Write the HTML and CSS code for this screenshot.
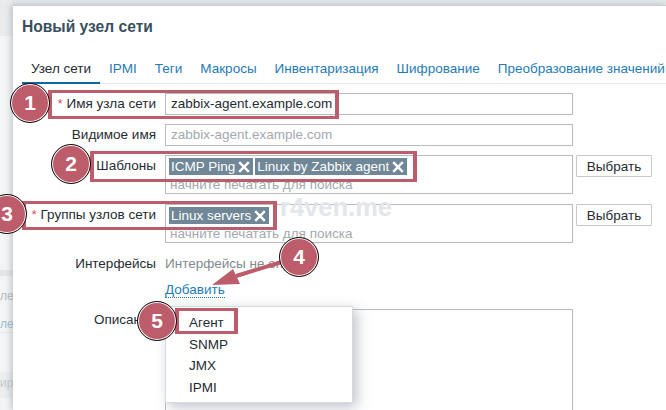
FILE: index.html
```html
<!DOCTYPE html>
<html lang="ru">
<head>
<meta charset="utf-8">
<title>Новый узел сети</title>
<link rel="stylesheet" href="styles.css">
</head>
<body>
<aside class="behind">
  <div class="behind-head"></div>
  <div class="behind-row band"></div>
  <div class="behind-row text">ле</div>
  <div class="behind-row text link">ле</div>
  <div class="behind-row blank"></div>
  <div class="behind-row text muted">ир</div>
</aside>
<div class="stage">
  <div class="topband"></div>
  <main class="dialog">
    <h1 class="title">Новый узел сети</h1>
    <nav class="tabs">
      <a class="tab active">Узел сети</a>
      <a class="tab">IPMI</a>
      <a class="tab">Теги</a>
      <a class="tab">Макросы</a>
      <a class="tab">Инвентаризация</a>
      <a class="tab">Шифрование</a>
      <a class="tab">Преобразование значений</a>
    </nav>
    <form class="form">
      <div class="row">
        <label class="label"><span class="req">*</span> Имя узла сети</label>
        <div class="input value">zabbix-agent.example.com</div>
      </div>
      <div class="row">
        <label class="label">Видимое имя</label>
        <div class="input placeholder">zabbix-agent.example.com</div>
      </div>
      <div class="row multi-row">
        <label class="label">Шаблоны</label>
        <div class="multi">
          <div class="chips">
            <span class="chip">ICMP Ping<svg class="x" viewBox="0 0 10 10"><path d="M1 1 9 9M9 1 1 9"/></svg></span>
            <span class="chip">Linux by Zabbix agent<svg class="x" viewBox="0 0 10 10"><path d="M1 1 9 9M9 1 1 9"/></svg></span>
          </div>
          <div class="hint">начните печатать для поиска</div>
        </div>
        <button type="button" class="btn">Выбрать</button>
      </div>
      <div class="row multi-row">
        <label class="label"><span class="req">*</span> Группы узлов сети</label>
        <div class="multi">
          <div class="chips">
            <span class="chip">Linux servers<svg class="x" viewBox="0 0 10 10"><path d="M1 1 9 9M9 1 1 9"/></svg></span>
          </div>
          <div class="hint">начните печатать для поиска</div>
        </div>
        <button type="button" class="btn">Выбрать</button>
      </div>
      <div class="row iface">
        <label class="label">Интерфейсы</label>
        <div class="iface-col">
          <div class="iface-none">Интерфейсы не определены</div>
          <a class="add">Добавить</a>
        </div>
      </div>
      <div class="row desc">
        <label class="label">Описание</label>
        <div class="textarea"></div>
      </div>
    </form>
  </main>
</div>

<div class="watermark">r4ven.me</div>

<ul class="menu">
  <li>Агент</li>
  <li>SNMP</li>
  <li>JMX</li>
  <li>IPMI</li>
</ul>

<div class="box b1"></div>
<div class="box b2"></div>
<div class="box b3"></div>
<div class="box b5"></div>

<svg class="arrow" viewBox="0 0 666 410"><path class="arrow-line" d="M285 261 236 276"/><path class="arrow-head" d="M212 285 233 269 240 284Z"/></svg>

<div class="badge n1">1</div>
<div class="badge n2">2</div>
<div class="badge n3">3</div>
<div class="badge n4">4</div>
<div class="badge n5">5</div>
</body>
</html>
```
FILE: styles.css
```css
* { box-sizing: border-box; }
html, body { margin: 0; }
html { overflow: hidden; }
body {
  display: flex;
  width: 666px;
  height: 410px;
  overflow: hidden;
  position: relative;
  background: #f3f4f5;
  font-family: Arial, "Liberation Sans", sans-serif;
  font-size: 13.5px;
  color: #1f2c33;
}
.behind { flex: none; width: 13px; height: 410px; display: flex; flex-direction: column; overflow: hidden; font-size: 12px; line-height: 16px; }
.behind-head { height: 36px; margin-bottom: 234px; background: #e9ebed; }
.behind-row { width: 13px; overflow: hidden; color: #b4bcc2; white-space: nowrap; }
.band { height: 6px; margin-bottom: 12px; background: #e3e6e8; }
.text { height: 16px; margin-bottom: 12px; border-bottom: 0; }
.link { color: #9dbdd2; margin-bottom: 0; }
.blank { height: 40px; border-top: 1px solid #e6e8ea; }
.muted { height: 26px; padding-top: 3px; background: #ebedee; color: #c6cbcf; }
.stage { flex: 1; min-width: 0; display: flex; flex-direction: column; }
.topband { flex: none; height: 5px; background: #e3e7ea; }
.dialog {
  flex: 1;
  min-height: 0;
  overflow: hidden;
  background: #fff;
  border-top: 1px solid #c9cfd4;
  box-shadow: -2px 0 6px rgba(120,130,140,.4);
  padding: 13px 0 0 9px;
}
.title { margin: 0; font-size: 15.6px; line-height: 16px; font-weight: 700; color: #384f5e; }
.tabs { display: flex; margin: 23px 0 0 0; height: 26px; border-bottom: 1px solid #e6e9eb; white-space: nowrap; }
.tab { padding: 0 9px; color: #1f7cb4; line-height: 22px; height: 26px; }
.tab.active { color: #1f2c33; border-bottom: 2px solid #0a6aa0; }
.form { display: flex; flex-direction: column; padding-top: 9px; }
.row { display: flex; align-items: flex-start; margin-bottom: 9px; }
.multi-row { margin-bottom: 10px; }
.label { width: 134px; margin-right: 9px; text-align: right; line-height: 22px; flex: none; white-space: nowrap; }
.req { color: #d5535e; }
.input, .multi, .textarea { width: 408px; flex: none; background: #fff; border: 1px solid #b7bcc0; }
.input { height: 22px; line-height: 20px; padding-left: 5px; }
.value { color: #1f2c33; }
.placeholder { color: #a4a9ad; }
.multi { height: 39px; padding: 2px 2px 0 3px; }
.chips { display: flex; gap: 2px; height: 17px; }
.chip { display: inline-flex; align-items: center; height: 17px; background: #6f8796; color: #fff; padding: 0 3px 0 2px; line-height: 16px; white-space: nowrap; }
.x { width: 12px; height: 12px; margin-left: 3px; }
.x path { fill: none; stroke: #fff; stroke-width: 2; }
.hint { color: #a4a9ad; line-height: 14px; margin-top: 3px; margin-left: 1px; white-space: nowrap; }
.btn { width: 76px; height: 22px; margin-left: 3px; padding: 0; background: #fff; border: 1px solid #c3c8cc; border-radius: 1px; font: inherit; color: #1f2c33; }
.iface { margin-bottom: 0; height: 56px; }
.iface-col { display: flex; flex-direction: column; align-items: flex-start; }
.iface-none { width: 135px; overflow: hidden; color: #7f8a91; line-height: 22px; white-space: nowrap; }
.add { margin-top: 7px; color: #1f7cb4; line-height: 15px; border-bottom: 1px dotted #1f7cb4; }
.desc { margin: 0; }
.textarea { height: 101px; border-bottom: 0; }
.watermark { position: absolute; left: 280px; top: 194px; font-size: 25.5px; font-weight: 700; color: #e3e6ea; line-height: 26px; }
.menu {
  position: absolute;
  left: 165px;
  top: 306px;
  width: 188px;
  height: 97px;
  margin: 0;
  padding: 5px 0 0 23px;
  list-style: none;
  background: #fff;
  border: 1px solid #d6dadd;
  box-shadow: 4px 4px 12px rgba(110,125,140,.45);
}
.menu li { height: 21.6px; line-height: 21px; color: #1f2c33; }
.box { position: absolute; border-style: solid; border-color: #bd5c6b; border-width: 3.5px 4px; }
.b1 { left: 48px; top: 90px; width: 291px; height: 29px; }
.b2 { left: 90px; top: 151px; width: 327px; height: 31px; }
.b3 { left: 22px; top: 201px; width: 255px; height: 29px; }
.b5 { left: 175px; top: 308px; width: 63px; height: 26px; }
.arrow { position: absolute; left: 0; top: 0; width: 666px; height: 410px; }
.arrow-line { stroke: #bd5c6b; stroke-width: 4; fill: none; }
.arrow-head { fill: #bd5c6b; }
.badge {
  position: absolute;
  width: 40px;
  height: 40px;
  border-radius: 50%;
  background: #bd5c6b;
  border: 1px solid #111;
  box-shadow: inset 0 0 0 1px #fff;
  color: #fff;
  font-size: 21px;
  font-weight: 700;
  line-height: 38px;
  text-align: center;
}
.n1 { left: 10px; top: 83px; }
.n2 { left: 51px; top: 144px; }
.n3 { left: -13px; top: 194px; }
.n4 { left: 279px; top: 237px; }
.n5 { left: 137px; top: 301px; }
```
